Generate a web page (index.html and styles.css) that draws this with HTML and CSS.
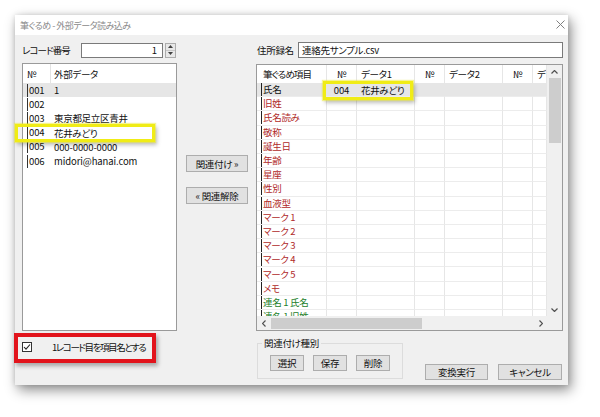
FILE: index.html
```html
<!DOCTYPE html>
<html lang="ja">
<head>
<meta charset="utf-8">
<title>外部データ読み込み</title>
<link rel="stylesheet" href="styles.css">
</head>
<body>
<div class="page">
  <div class="window">
    <div class="titlebar">
      <span class="title">筆ぐるめ - 外部データ読み込み</span>
      <svg class="close" width="9" height="9" viewBox="0 0 9 9"><path d="M0.5 0.5L8.5 8.5M8.5 0.5L0.5 8.5" stroke="#808080" stroke-width="1" fill="none"/></svg>
    </div>
    <div class="body">
      <div class="col left">
        <div class="toprow">
          <span class="lbl lbl-rec kana">レコード番号</span>
          <div class="numbox en">1</div>
          <div class="spin">
            <span class="sp"><svg width="5" height="3" viewBox="0 0 5 3"><path d="M0 3L2.5 0L5 3Z" fill="#404040"/></svg></span>
            <span class="sp"><svg width="5" height="3" viewBox="0 0 5 3"><path d="M0 0L2.5 3L5 0Z" fill="#404040"/></svg></span>
          </div>
        </div>
        <div class="listbox">
          <div class="lhead"><div class="lc1">№</div><div class="lc2">外部データ</div></div>
          <div class="lrow sel"><div class="lc1"><span class="bar en">001</span></div><div class="lc2 en">1</div></div>
          <div class="lrow"><div class="lc1"><span class="bar en">002</span></div><div class="lc2"></div></div>
          <div class="lrow"><div class="lc1"><span class="bar en">003</span></div><div class="lc2">東京都足立区青井</div></div>
          <div class="lrow"><div class="lc1"><span class="bar en">004</span></div><div class="lc2">花井みどり</div></div>
          <div class="lrow"><div class="lc1"><span class="bar en">005</span></div><div class="lc2 en">000-0000-0000</div></div>
          <div class="lrow"><div class="lc1"><span class="bar en">006</span></div><div class="lc2 en">midori@hanai.com</div></div>
        </div>
        <label class="check">
          <span class="box"><svg width="8" height="8" viewBox="0 0 8 8"><path d="M1 4L3 6.2L7 1.5" stroke="#222" stroke-width="1.1" fill="none"/></svg></span>
          <span class="ctext">1レコード目を項目名とする</span>
        </label>
      </div>

      <div class="col mid">
        <button class="btn midbtn">関連付け »</button>
        <button class="btn midbtn">« 関連解除</button>
      </div>

      <div class="col right">
        <div class="toprow">
          <span class="lbl lbl-name">住所録名</span>
          <div class="namebox">連絡先サンプル.csv</div>
        </div>
        <div class="gridbox">
          <div class="view">
            <div class="grow head">
              <div class="hitem"><span class="kana">筆ぐるめ項目</span></div><div class="num">№</div><div class="dat">データ1</div><div class="num">№</div><div class="dat">データ2</div><div class="num">№</div><div class="dat">データ3</div>
            </div>
            <div class="grow sel"><div class="item"><span>氏名</span></div><div class="num en">004</div><div class="dat">花井みどり</div><div></div><div></div><div></div><div></div></div>
            <div class="grow red"><div class="item"><span>旧姓</span></div><div></div><div></div><div></div><div></div><div></div><div></div></div>
            <div class="grow red"><div class="item"><span>氏名読み</span></div><div></div><div></div><div></div><div></div><div></div><div></div></div>
            <div class="grow red"><div class="item"><span>敬称</span></div><div></div><div></div><div></div><div></div><div></div><div></div></div>
            <div class="grow red"><div class="item"><span>誕生日</span></div><div></div><div></div><div></div><div></div><div></div><div></div></div>
            <div class="grow red"><div class="item"><span>年齢</span></div><div></div><div></div><div></div><div></div><div></div><div></div></div>
            <div class="grow red"><div class="item"><span>星座</span></div><div></div><div></div><div></div><div></div><div></div><div></div></div>
            <div class="grow red"><div class="item"><span>性別</span></div><div></div><div></div><div></div><div></div><div></div><div></div></div>
            <div class="grow red"><div class="item"><span>血液型</span></div><div></div><div></div><div></div><div></div><div></div><div></div></div>
            <div class="grow red"><div class="item"><span>マーク 1</span></div><div></div><div></div><div></div><div></div><div></div><div></div></div>
            <div class="grow red"><div class="item"><span>マーク 2</span></div><div></div><div></div><div></div><div></div><div></div><div></div></div>
            <div class="grow red"><div class="item"><span>マーク 3</span></div><div></div><div></div><div></div><div></div><div></div><div></div></div>
            <div class="grow red"><div class="item"><span>マーク 4</span></div><div></div><div></div><div></div><div></div><div></div><div></div></div>
            <div class="grow red"><div class="item"><span>マーク 5</span></div><div></div><div></div><div></div><div></div><div></div><div></div></div>
            <div class="grow red"><div class="item"><span>メモ</span></div><div></div><div></div><div></div><div></div><div></div><div></div></div>
            <div class="grow green"><div class="item"><span>連名 1 氏名</span></div><div></div><div></div><div></div><div></div><div></div><div></div></div>
            <div class="grow green"><div class="item"><span>連名 1 旧姓</span></div><div></div><div></div><div></div><div></div><div></div><div></div></div>
          </div>
          <div class="vscroll">
            <div class="arrow"><svg width="7" height="4" viewBox="0 0 7 4"><path d="M0.5 3.5L3.5 0.5L6.5 3.5" stroke="#505050" stroke-width="1.2" fill="none"/></svg></div>
            <div class="vthumb"></div>
            <div class="fill"></div>
            <div class="arrow"><svg width="7" height="4" viewBox="0 0 7 4"><path d="M0.5 0.5L3.5 3.5L6.5 0.5" stroke="#505050" stroke-width="1.2" fill="none"/></svg></div>
          </div>
          <div class="hscroll">
            <div class="harrow"><svg width="4" height="7" viewBox="0 0 4 7"><path d="M3.5 0.5L0.5 3.5L3.5 6.5" stroke="#505050" stroke-width="1.2" fill="none"/></svg></div>
            <div class="hthumb"></div>
            <div class="fill"></div>
            <div class="harrow"><svg width="4" height="7" viewBox="0 0 4 7"><path d="M0.5 0.5L3.5 3.5L0.5 6.5" stroke="#505050" stroke-width="1.2" fill="none"/></svg></div>
          </div>
          <div class="corner"></div>
        </div>
        <div class="bottom">
          <fieldset class="group">
            <legend>関連付け種別</legend>
            <div class="gbtns">
              <button class="btn gbtn">選択</button>
              <button class="btn gbtn">保存</button>
              <button class="btn gbtn">削除</button>
            </div>
          </fieldset>
          <div class="actions">
            <button class="btn act">変換実行</button>
            <button class="btn act">キャンセル</button>
          </div>
        </div>
      </div>
    </div>

    <div class="mark hl-left"></div>
    <div class="mark hl-right"></div>
    <div class="mark red-box"></div>
  </div>
</div>
</body>
</html>
```

FILE: styles.css
```css
* { box-sizing: border-box; }
html, body { margin: 0; padding: 0; }
body {
  width: 600px;
  height: 417px;
  overflow: hidden;
  background: #ffffff;
  font-family: "Noto Sans CJK JP", "Noto Sans", sans-serif;
  font-size: 9.5px;
  letter-spacing: -0.3px;
  color: #111;
  font-feature-settings: "palt";
}
.en { letter-spacing: -0.1px; }
.kana { letter-spacing: -0.9px; }
.page { padding: 15px 0 0 15px; }
.window {
  position: relative;
  width: 553px;
  height: 370px;
  background: #f0f0f0;
  display: flex;
  flex-direction: column;
  box-shadow: 3px 5px 12px rgba(0,0,0,0.45), 0 0 5px rgba(0,0,0,0.12);
}
.titlebar {
  height: 20px;
  background: #ffffff;
  display: flex;
  align-items: center;
  justify-content: space-between;
  padding: 0 3px 0 5px;
}
.title { font-size: 9px; color: #8a8a8a; letter-spacing: -0.5px; }
.close { display: block; margin-top: -1px; }

.body {
  flex: 1;
  display: grid;
  grid-template-columns: 155px 79px 307px;
  padding: 7px 5px 0 7px;
}
.col { display: flex; flex-direction: column; }

.toprow { height: 16px; display: flex; align-items: center; }
.lbl { white-space: nowrap; flex-shrink: 0; }
.lbl-rec { width: 59px; }
.numbox {
  width: 82px; height: 15px;
  border: 1px solid #7a7a7a;
  background: #fff;
  text-align: right;
  padding-right: 5px;
  line-height: 13px;
}
.spin {
  margin-left: 2px;
  width: 11px; height: 15px;
  display: flex; flex-direction: column;
  border: 1px solid #adadad;
  background: #e8e8e8;
}
.sp { flex: 1; display: flex; align-items: center; justify-content: center; }
.sp + .sp { border-top: 1px solid #c8c8c8; }
.sp svg { display: block; }

.listbox {
  margin-top: 5px;
  height: 268px;
  border: 1px solid #9a9a9a;
  background: #fff;
}
.lhead { height: 19px; display: flex; }
.lhead .lc1 {
  width: 28px;
  padding-left: 4px;
  border-right: 1px solid #e3e3e3;
  display: flex; align-items: center;
}
.lhead .lc2 { padding-left: 3px; display: flex; align-items: center; }
.lrow { height: 14.2px; display: flex; align-items: center; }
.lrow.sel { background: #e6e6e6; }
.lrow .lc1 { width: 28px; padding-left: 4px; display: flex; align-items: center; }
.lrow .lc2 { padding-left: 3px; white-space: nowrap; }
.bar { border-left: 1px solid #333; padding-left: 1px; line-height: 13px; }

.check { margin-top: 10px; height: 12px; display: flex; align-items: center; }
.box {
  width: 10px; height: 10px;
  border: 1px solid #333;
  background: #fff;
  display: flex; align-items: center; justify-content: center;
  flex-shrink: 0;
}
.box svg { display: block; }
.ctext { margin-left: 20px; white-space: nowrap; letter-spacing: -1.4px; }

.btn {
  font-family: inherit;
  font-size: 9.5px;
  letter-spacing: -0.3px;
  font-feature-settings: "palt";
  color: #111;
  background: #e1e1e1;
  border: 1px solid #adadad;
  padding: 0;
  margin: 0;
  line-height: 14px;
}
.mid { padding: 113px 0 0 9px; gap: 15px; }
.midbtn { width: 62px; height: 17px; }

.lbl-name { width: 42px; padding-left: 1px; }
.namebox {
  flex: 1; height: 16px;
  border: 1px solid #7a7a7a;
  background: #fff;
  padding-left: 3px;
  line-height: 14px;
}
.gridbox {
  margin-top: 6px;
  height: 267px;
  border: 1px solid #9a9a9a;
  background: #fff;
  display: grid;
  grid-template-columns: 290px 15px;
  grid-template-rows: 251px 14px;
}
.view { overflow: hidden; }
.grow {
  display: grid;
  grid-template-columns: 70px 30px 58px 30px 58px 30px 14px;
  height: 14.2px;
}
.grow > div {
  border-right: 1px solid #e6e6e6;
  border-bottom: 1px solid #ececec;
  white-space: nowrap;
  overflow: hidden;
  display: flex;
  align-items: center;
}
.grow.head { height: 18px; }
.grow.head > div { border-bottom: none; }
.grow.sel > div { background: #e6e6e6; }
.hitem { padding-left: 6px; }
.num { justify-content: center; }
.dat { padding-left: 4px; }
.item { padding-left: 4px; }
.item span { border-left: 1px solid #222; padding-left: 1px; line-height: 13px; }
.red .item span { color: #b02a2a; }
.green .item span { color: #23802c; }

.vscroll { background: #f0f0f0; display: flex; flex-direction: column; }
.arrow { height: 13px; display: flex; align-items: center; justify-content: center; }
.arrow svg, .harrow svg { display: block; }
.vthumb { margin-left: 2px; width: 12px; height: 65px; background: #cdcdcd; }
.fill { flex: 1; }
.hscroll { background: #f0f0f0; display: flex; align-items: center; }
.harrow { width: 13px; height: 14px; display: flex; align-items: center; justify-content: center; }
.hthumb { margin-left: 1px; width: 151px; height: 11px; background: #cdcdcd; }
.corner { background: #f0f0f0; }

.bottom { flex: 1; display: flex; padding-left: 1px; }
.group {
  margin: 5px 0 0 0;
  padding: 0 0 6px 4px;
  border: 1px solid #dcdcdc;
  width: 146px;
  height: 43px;
  min-inline-size: 0;
  align-self: flex-start;
}
.group legend { padding: 0 2px; line-height: 14px; }
.gbtns { display: flex; gap: 9px; margin-top: 5px; padding-left: 8px; }
.gbtn { width: 34px; height: 16px; }
.actions {
  margin-left: auto;
  margin-right: 1px;
  margin-bottom: 5px;
  align-self: flex-end;
  display: flex;
  gap: 10px;
}
.act { width: 63px; height: 16px; }
.act + .act { width: 64px; }

.mark { position: absolute; pointer-events: none; }
.hl-left {
  left: 0; top: 109px; width: 140px; height: 18px;
  border: 3px solid #f0ec16;
  box-shadow: 0 0 1px 1px rgba(240,236,40,0.5), 2px 3px 4px rgba(0,0,0,0.25);
}
.hl-right {
  left: 308px; top: 66px; width: 90px; height: 19px;
  border: 3px solid #f0ec16;
  box-shadow: 0 0 1px 1px rgba(240,236,40,0.5), 2px 3px 4px rgba(0,0,0,0.25);
}
.red-box {
  left: -1px; top: 318px; width: 142px; height: 30px;
  border: 4px solid #e2141c;
  box-shadow: 2px 3px 4px rgba(0,0,0,0.3);
}
```
